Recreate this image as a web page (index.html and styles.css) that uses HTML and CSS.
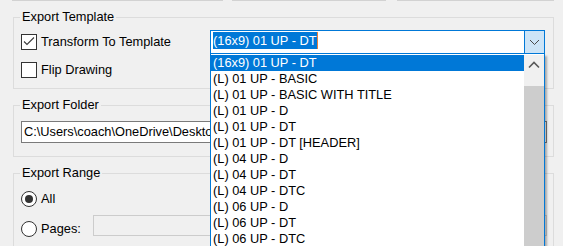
FILE: index.html
```html
<!DOCTYPE html>
<html lang="en">
  <head>
    <meta charset="UTF-8" />
    <meta name="viewport" content="width=device-width, initial-scale=1.0" />
    <title>Export Options</title>
    <link rel="stylesheet" href="styles.css">
  </head>
  <body>
    <div class="top-buttons">
      <span class="btn-edge first"></span>
      <span class="btn-edge second"></span>
      <span class="btn-edge third"></span>
    </div>

    <div class="panel">
      <fieldset class="group group-template">
        <legend>Export Template</legend>
        <div class="row">
          <label class="check check-wide">
            <span class="box">
              <svg width="14" height="14" viewBox="0 0 14 14">
                <polyline points="2,6.5 5,9.5 12,2.5" fill="none" stroke="#3c3c3c" stroke-width="1.1" />
              </svg>
            </span>
            <span>Transform To Template</span>
          </label>
          <div class="combo-wrap">
            <div class="combo">
              <span class="combo-value">(16x9) 01 UP - DT</span>
              <span class="combo-btn">
                <svg width="19" height="22" viewBox="0 0 19 22">
                  <polyline points="5,9 9.5,13.5 14,9" fill="none" stroke="#4a4a4a" stroke-width="1" />
                </svg>
              </span>
            </div>

            <!-- open drop-down list -->
            <div class="drop-list">
              <ul class="items">
                <li class="selected">(16x9) 01 UP - DT</li>
                <li>(L) 01 UP - BASIC</li>
                <li>(L) 01 UP - BASIC WITH TITLE</li>
                <li>(L) 01 UP - D</li>
                <li>(L) 01 UP - DT</li>
                <li>(L) 01 UP - DT [HEADER]</li>
                <li>(L) 04 UP - D</li>
                <li>(L) 04 UP - DT</li>
                <li>(L) 04 UP - DTC</li>
                <li>(L) 06 UP - D</li>
                <li>(L) 06 UP - DT</li>
                <li>(L) 06 UP - DTC</li>
                <li>(L) 09 UP - D</li>
              </ul>
              <div class="scrollbar">
                <span class="arrow-up">
                  <svg width="20" height="17" viewBox="0 0 20 17">
                    <polyline points="5,12.5 10,7.5 15,12.5" fill="none" stroke="#5a5a5a" stroke-width="1.6" />
                  </svg>
                </span>
                <span class="thumb"></span>
              </div>
            </div>
          </div>
        </div>
        <div class="row row-second">
          <label class="check">
            <span class="box"></span>
            <span>Flip Drawing</span>
          </label>
        </div>
      </fieldset>

      <fieldset class="group group-folder">
        <legend>Export Folder</legend>
        <div class="textbox folder">C:\Users\coach\OneDrive\Desktop\Exports</div>
      </fieldset>

      <fieldset class="group group-range">
        <legend>Export Range</legend>
        <div class="row radio-row">
          <label class="radio">
            <span class="circle checked"></span>
            <span>All</span>
          </label>
        </div>
        <div class="row radio-row">
          <label class="radio radio-pages">
            <span class="circle"></span>
            <span>Pages:</span>
          </label>
          <div class="textbox pages"></div>
        </div>
      </fieldset>
    </div>
  </body>
</html>
```

FILE: styles.css
```css
html, body {
    margin: 0;
    height: 100%;
    overflow: hidden;
}
body {
    background: #f0f0f0;
    font-family: "Liberation Sans", Arial, sans-serif;
    font-size: 12.8px;
    line-height: 16px;
    color: #000;
}
.top-buttons {
    display: flex;
    height: 1px;
}
.btn-edge {
    display: block;
    height: 1px;
    background: #d2d2d2;
}
.btn-edge.first {
    margin-left: 12px;
    width: 211px;
}
.btn-edge.second {
    margin-left: 9px;
    width: 154px;
}
.btn-edge.third {
    margin-left: 11px;
    width: 157px;
}
.panel {
    padding: 0 9px 0 13px;
}
.group {
    margin: 9px 0 0 0;
    padding: 0 6px 6px 7px;
    border: 1px solid #dcdcdc;
    min-inline-size: 0;
}
.group legend {
    padding: 0 2px;
    margin-left: -1px;
    line-height: 14px;
}
.row {
    display: flex;
    align-items: center;
    height: 24px;
}
.group-template .row {
    margin-top: 6px;
}
.group-template .row-second {
    margin-top: 4px;
}
.check, .radio {
    display: flex;
    align-items: center;
    gap: 4px;
}
.check-wide {
    width: 189px;
}
.box {
    box-sizing: border-box;
    width: 16px;
    height: 16px;
    border: 1px solid #333;
    background: #fff;
    display: flex;
    align-items: center;
    justify-content: center;
}
.box svg {
    display: block;
}

/* combo box */
.combo-wrap {
    position: relative;
}
.combo {
    box-sizing: border-box;
    width: 335px;
    height: 24px;
    border: 1px solid #0078d7;
    background: #fff;
    display: flex;
}
.combo-value {
    flex: 1;
    align-self: flex-start;
    margin: 1px 0 0 2px;
}
.combo-value::first-line {
    background: #0078d7;
}
.combo-value {
    color: #fff;
}
.combo-value {
    max-width: max-content;
    background: #0078d7;
    height: 17px;
    line-height: 17px;
    border-right: 1px solid #e8803a;
}
.combo-spacer {
    flex: 1;
}
.combo-btn {
    margin-left: auto;
    box-sizing: border-box;
    width: 20px;
    border-left: 1px solid #0078d7;
    background: #cce4f7;
}
.combo-btn svg {
    display: block;
}
.drop-list {
    position: absolute;
    top: 100%;
    left: 0;
    box-sizing: border-box;
    width: 335px;
    height: 220px;
    padding-top: 1px;
    background: #fff;
    border: 1px solid #0078d7;
    border-top: none;
    box-shadow: 2px 2px 2px rgba(0, 0, 0, 0.3);
    display: flex;
    z-index: 5;
}
.items {
    list-style: none;
    margin: 0;
    padding: 0;
    flex: 1;
}
.items li {
    height: 16px;
    line-height: 16px;
    padding-left: 2px;
    white-space: nowrap;
}
.items li.selected {
    background: #0078d7;
    color: #fff;
}
.scrollbar {
    width: 20px;
    background: #f0f0f0;
    display: flex;
    flex-direction: column;
}
.arrow-up svg {
    display: block;
}
.thumb {
    margin-top: 14px;
    flex: 1;
    background: #cdcdcd;
}

/* folder */
.textbox {
    box-sizing: border-box;
    height: 22px;
    border: 1px solid #7a7a7a;
    background: #fff;
    white-space: nowrap;
    overflow: hidden;
}
.folder {
    margin-top: 9px;
    padding: 2px 0 0 2px;
    line-height: 16px;
}
.group-folder {
    padding-bottom: 13px;
}

/* range */
.group-range {
    height: 120px;
}
.radio-row {
    margin-top: 7px;
    height: 23px;
}
.circle {
    box-sizing: border-box;
    width: 16px;
    height: 16px;
    border: 1px solid #333;
    border-radius: 50%;
    background: #fff;
    display: flex;
    align-items: center;
    justify-content: center;
}
.circle.checked::after {
    content: "";
    width: 8px;
    height: 8px;
    border-radius: 50%;
    background: #333;
}
.radio-pages {
    width: 72px;
}
.pages {
    flex: 1;
    align-self: flex-start;
    margin-top: -2px;
    height: 21px;
    border-color: #cccccc;
    background: #f0f0f0;
}
```
